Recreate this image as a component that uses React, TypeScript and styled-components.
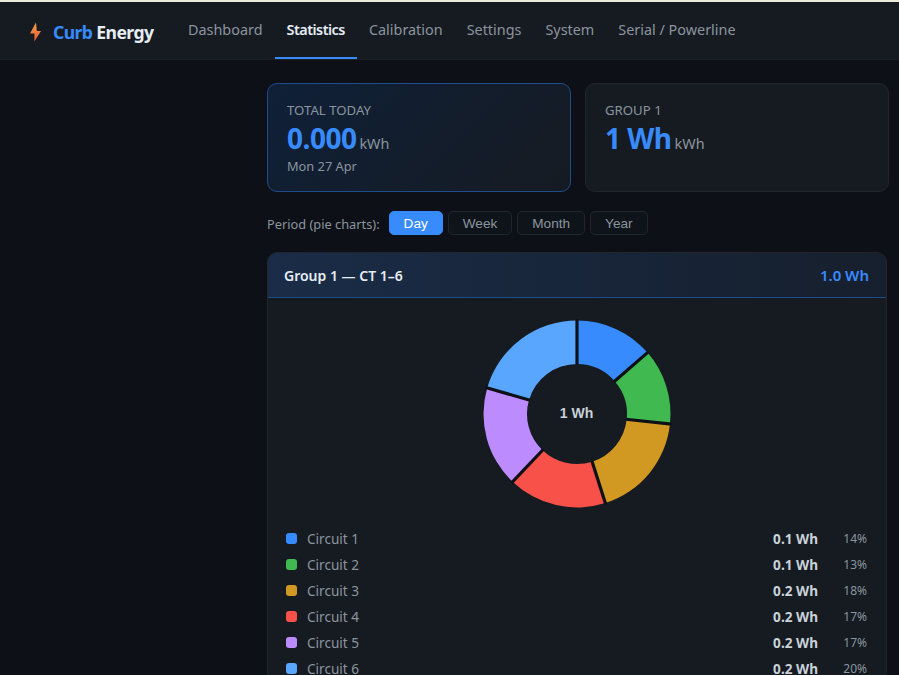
import React from "react";
import styled, { createGlobalStyle } from "styled-components";

const CIRCUITS = [
  { name: "Circuit 1", value: "0.1 Wh", pct: 14, share: 13.6, color: "#388bfd" },
  { name: "Circuit 2", value: "0.1 Wh", pct: 13, share: 13.1, color: "#3fb950" },
  { name: "Circuit 3", value: "0.2 Wh", pct: 18, share: 18.4, color: "#d29922" },
  { name: "Circuit 4", value: "0.2 Wh", pct: 17, share: 17, color: "#f85149" },
  { name: "Circuit 5", value: "0.2 Wh", pct: 17, share: 17.4, color: "#bc8cff" },
  { name: "Circuit 6", value: "0.2 Wh", pct: 20, share: 20.5, color: "#58a6ff" },
];

const NAV = ["Dashboard", "Statistics", "Calibration", "Settings", "System", "Serial / Powerline"];
const PERIODS = ["Day", "Week", "Month", "Year"];

function polar(cx: number, cy: number, r: number, turn: number) {
  const a = turn * 2 * Math.PI - Math.PI / 2;
  return [cx + r * Math.cos(a), cy + r * Math.sin(a)];
}

function slicePath(from: number, to: number) {
  const [x1, y1] = polar(100, 100, 93.5, from);
  const [x2, y2] = polar(100, 100, 93.5, to);
  const [x3, y3] = polar(100, 100, 50, to);
  const [x4, y4] = polar(100, 100, 50, from);
  const large = to - from > 0.5 ? 1 : 0;
  return `M${x1} ${y1}A93.5 93.5 0 ${large} 1 ${x2} ${y2}L${x3} ${y3}A50 50 0 ${large} 0 ${x4} ${y4}Z`;
}

function Donut() {
  let start = 0;
  const slices = CIRCUITS.map((c) => {
    const from = start;
    start += c.share / 100;
    return { ...c, from, to: start };
  });
  return (
    <DonutBox>
      <svg width="200" height="200" viewBox="0 0 200 200">
        {slices.map((s) => (
          <path key={s.name} d={slicePath(s.from, s.to)} fill={s.color} />
        ))}
        {slices.map((s) => {
          const [x1, y1] = polar(100, 100, 49, s.from);
          const [x2, y2] = polar(100, 100, 95, s.from);
          return <line key={s.name} x1={x1} y1={y1} x2={x2} y2={y2} stroke="#0d1117" strokeWidth="3.2" />;
        })}
      </svg>
      <DonutLabel>1 Wh</DonutLabel>
    </DonutBox>
  );
}

export default function App() {
  return (
    <>
      <GlobalStyle />
      <Header>
        <Brand>
          <svg width="14" height="20" viewBox="0 0 14 20">
            <defs>
              <linearGradient id="bolt" x1="0" y1="0" x2="0" y2="1">
                <stop offset="0" stopColor="#f9a24a" />
                <stop offset="1" stopColor="#e8552f" />
              </linearGradient>
            </defs>
            <path d="M8 0.5 2 11.5H6.4V19.5L13 9H8.8Z" fill="url(#bolt)" />
          </svg>
          <BrandName>
            <span>Curb</span> Energy
          </BrandName>
        </Brand>
        <Nav>
          {NAV.map((item) => (
            <NavItem key={item} $active={item === "Statistics"}>
              {item}
            </NavItem>
          ))}
        </Nav>
      </Header>
      <Main>
        <Cards>
          <StatCard $primary>
            <StatLabel>TOTAL TODAY</StatLabel>
            <StatValue>
              0.000<small>kWh</small>
            </StatValue>
            <StatSub>Mon 27 Apr</StatSub>
          </StatCard>
          <StatCard>
            <StatLabel>GROUP 1</StatLabel>
            <StatValue>
              1 Wh<small>kWh</small>
            </StatValue>
          </StatCard>
        </Cards>
        <PeriodRow>
          <PeriodLabel>Period (pie charts):</PeriodLabel>
          {PERIODS.map((p) => (
            <PeriodButton key={p} $active={p === "Day"}>
              {p}
            </PeriodButton>
          ))}
        </PeriodRow>
        <Panel>
          <PanelHead>
            <PanelTitle>Group 1 — CT 1–6</PanelTitle>
            <PanelTotal>1.0 Wh</PanelTotal>
          </PanelHead>
          <PanelBody>
            <Donut />
            <Legend>
              {CIRCUITS.map((c) => (
                <LegendRow key={c.name}>
                  <Swatch $color={c.color} />
                  <LegendName>{c.name}</LegendName>
                  <LegendValue>{c.value}</LegendValue>
                  <LegendPct>{c.pct}%</LegendPct>
                </LegendRow>
              ))}
            </Legend>
          </PanelBody>
        </Panel>
      </Main>
    </>
  );
}

const GlobalStyle = createGlobalStyle`
  html, body {
    margin: 0;
    height: 100%;
    overflow: hidden;
    background: #0d1117;
  }
  body {
    font-family: "Noto Sans", "Open Sans", sans-serif;
    color: #e6edf3;
  }
  * {
    box-sizing: border-box;
  }
`;

const Header = styled.header`
  display: flex;
  align-items: center;
  height: 60px;
  padding-left: 28px;
  background: #161b22;
  border-top: 2px solid #eceade;
  border-bottom: 1px solid #1c2129;
`;

const Brand = styled.div`
  display: flex;
  align-items: center;
  gap: 11px;
  width: 148px;
  padding-top: 2px;
`;

const BrandName = styled.div`
  font-size: 17.6px;
  font-weight: 700;
  letter-spacing: -0.6px;
  white-space: nowrap;
  color: #e6edf3;

  span {
    color: #388bfd;
  }
`;

const Nav = styled.nav`
  display: flex;
  align-self: stretch;
`;

const NavItem = styled.div<{ $active?: boolean }>`
  display: flex;
  align-items: center;
  padding: 0 12px;
  font-size: 14.4px;
  font-weight: ${(p) => (p.$active ? 600 : 400)};
  letter-spacing: ${(p) => (p.$active ? "-0.5px" : "0")};
  color: ${(p) => (p.$active ? "#e6edf3" : "#8b949e")};
  border-bottom: 2px solid ${(p) => (p.$active ? "#388bfd" : "transparent")};
  white-space: nowrap;
`;

const Main = styled.main`
  padding: 23px 10px 0 267px;
`;

const Cards = styled.div`
  display: grid;
  grid-template-columns: 304px 304px;
  gap: 14px;
`;

const StatCard = styled.div<{ $primary?: boolean }>`
  height: 109px;
  padding: 17px 19px;
  border-radius: 10px;
  border: 1px solid ${(p) => (p.$primary ? "#1f4c8a" : "#21262d")};
  background: ${(p) => (p.$primary ? "linear-gradient(135deg, #0f2038, #161b22)" : "#161b22")};
`;

const StatLabel = styled.div`
  font-size: 13.2px;
  line-height: 18px;
  color: #8b949e;
`;

const StatValue = styled.div`
  font-size: 28px;
  font-weight: 700;
  line-height: 38px;
  letter-spacing: -0.5px;
  color: #388bfd;

  small {
    margin-left: 3px;
    font-size: 14.4px;
    font-weight: 400;
    line-height: 1;
    letter-spacing: 0;
    color: #8b949e;
  }
`;

const StatSub = styled.div`
  margin-top: 1px;
  font-size: 12.8px;
  line-height: 16px;
  color: #8b949e;
`;

const PeriodRow = styled.div`
  display: flex;
  align-items: center;
  gap: 5px;
  margin: 19px 0 17px;
`;

const PeriodLabel = styled.span`
  margin: 2px 4px 0 0;
  font-size: 12.8px;
  color: #8b949e;
`;

const PeriodButton = styled.div<{ $active?: boolean }>`
  height: 24px;
  padding: 0 14px;
  font-family: "Liberation Sans", sans-serif;
  font-size: 13.6px;
  line-height: 23px;
  border-radius: 5px;
  border: 1px solid ${(p) => (p.$active ? "#388bfd" : "#21262d")};
  background: ${(p) => (p.$active ? "#388bfd" : "#0f141b")};
  color: ${(p) => (p.$active ? "#fff" : "#8b949e")};
`;

const Panel = styled.section`
  width: 620px;
  border: 1px solid #21262d;
  border-radius: 10px;
  background: #161b22;
  overflow: hidden;
`;

const PanelHead = styled.div`
  display: flex;
  align-items: center;
  justify-content: space-between;
  height: 45px;
  padding: 0 17px 0 16px;
  background: linear-gradient(90deg, #1a2c47, #161f2d);
  border-bottom: 1px solid #1f4c8a;
`;

const PanelTitle = styled.div`
  font-size: 14px;
  font-weight: 600;
  color: #e6edf3;
`;

const PanelTotal = styled.div`
  font-size: 15px;
  font-weight: 600;
  color: #388bfd;
`;

const PanelBody = styled.div`
  padding: 16px 19px 0 18px;
`;

const DonutBox = styled.div`
  position: relative;
  width: 200px;
  height: 200px;
  margin: 0 auto 11px;
`;

const DonutLabel = styled.div`
  position: absolute;
  inset: 0 0 2px;
  display: flex;
  align-items: center;
  justify-content: center;
  font-family: "Liberation Sans", sans-serif;
  font-size: 14px;
  font-weight: 700;
  color: #c9d1d9;
`;

const Legend = styled.div`
  display: flex;
  flex-direction: column;
`;

const LegendRow = styled.div`
  display: flex;
  align-items: center;
  height: 26px;
`;

const Swatch = styled.span<{ $color: string }>`
  flex: none;
  width: 11px;
  height: 11px;
  margin-right: 10px;
  border-radius: 3px;
  background: ${(p) => p.$color};
`;

const LegendName = styled.span`
  flex: 1;
  font-size: 13.6px;
  color: #8b949e;
`;

const LegendValue = styled.span`
  font-size: 13.6px;
  font-weight: 700;
  color: #c9d1d9;
`;

const LegendPct = styled.span`
  width: 49px;
  text-align: right;
  font-size: 12px;
  color: #8b949e;
`;
